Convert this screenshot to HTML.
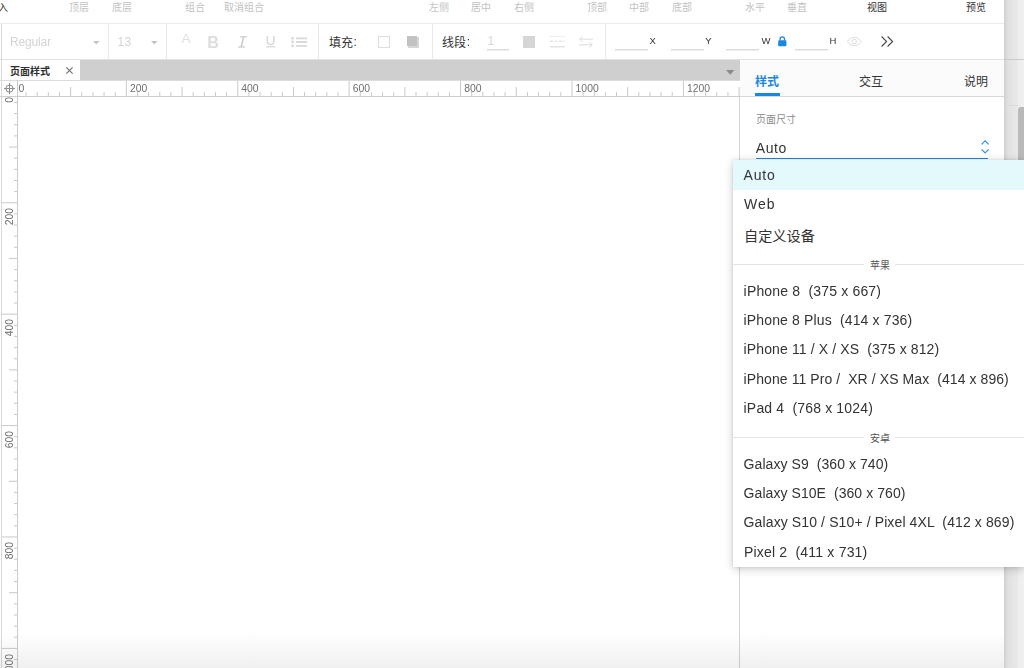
<!DOCTYPE html>
<html lang="zh">
<head>
<meta charset="utf-8">
<title>Axure RP - 页面样式</title>
<style>
*{box-sizing:border-box;margin:0;padding:0}
html,body{width:1024px;height:668px;overflow:hidden;background:#fff}
body{position:relative;font-family:"Liberation Sans",sans-serif;color:#333}
.abs,.abs>*{position:absolute}
svg{position:absolute;display:block;overflow:visible}
svg text{font-family:"Liberation Sans","Noto Sans CJK SC",sans-serif;white-space:pre}
.t{position:absolute;white-space:pre;line-height:1}
.L{position:absolute;left:0;top:0;width:100%;height:100%;will-change:transform}
/* top menu */
#menu{left:0;top:0;width:1004px;height:24px;background:#fff;border-bottom:1px solid #ebebeb}
#menu svg{top:2.100px}
/* toolbar */
#tool{left:0;top:24px;width:1004px;height:36px;background:#fff;border-bottom:1px solid #e2e2e2}
.vsep{position:absolute;top:0;width:1px;height:35px;background:#e9e9e9}
.uline{position:absolute;height:2px;background:linear-gradient(180deg,#dadada 0,#dadada 1px,#f0f0f0 1px,#f0f0f0 2px);top:25px}
.lbl{position:absolute;font-size:9.5px;line-height:1;top:36.400px;color:#333}
/* tab bar */
#tabs{left:0;top:60px;width:740px;height:20.5px;background:#cfcfcf}
#tab1{left:0;top:0;width:80px;height:20.5px;background:#fff}
/* rulers */
#rh{left:0;top:80px;width:740px;height:17px;background:#fff}
#rv{left:0;top:97px;width:18px;height:571px;background:#fff}
.rl{position:absolute;top:4.3px;font-size:10.4px;line-height:1;color:#6e6e6e}
.rv{position:absolute;left:5.400px;font-size:10.4px;line-height:1;color:#6e6e6e;transform-origin:0 0;transform:rotate(-90deg) translateX(-100%)}
/* right panel */
#panel{left:741px;top:60px;width:263px;height:608px;background:#fff}
#phead{left:-1px;top:0;width:264px;height:37px;background:#fbfbfb;border-bottom:1px solid #d8d8d8}
/* right strip */
#strip{left:1004px;top:0;width:20px;height:668px;background:linear-gradient(90deg,#cbcbcb 0,#d8d8d8 1.500px,#e2e2e2 5px,#e9e9e9 14px,#ededed 14px,#f0f0f0 20px)}
/* dropdown */
#dd{left:733px;top:160px;width:291px;height:407px;background:#fff;box-shadow:0 2px 9px rgba(0,0,0,.20),0 0 3px rgba(0,0,0,.10)}
.dd{font-size:14px;color:#333}
#hl{left:0;top:0;width:291px;height:30px;background:#e3f9fc}
.hr{position:absolute;height:1px;background:#e4e4e4}
#fade{left:0;top:632px;width:1004px;height:36px;background:linear-gradient(180deg,rgba(0,0,0,0) 0,rgba(0,0,0,.058) 100%);pointer-events:none}
</style>
</head>
<body>

<!-- ===== top menu ===== -->
<div id="menu" class="abs">
<svg width="10" height="10" viewBox="0 0 10 10" style="left:-1.6px" fill="#333"><text x="0" y="8.8" font-size="10" fill="#333">入</text></svg>
<svg width="20" height="10" viewBox="0 0 20 10" style="left:69px" fill="#c3c3c3"><text x="0" y="8.8" font-size="10" fill="#c3c3c3">顶层</text></svg>
<svg width="20" height="10" viewBox="0 0 20 10" style="left:111.5px" fill="#c3c3c3"><text x="0" y="8.8" font-size="10" fill="#c3c3c3">底层</text></svg>
<svg width="20" height="10" viewBox="0 0 20 10" style="left:184.5px" fill="#c3c3c3"><text x="0" y="8.8" font-size="10" fill="#c3c3c3">组合</text></svg>
<svg width="40" height="10" viewBox="0 0 40 10" style="left:223.7px" fill="#c3c3c3"><text x="0" y="8.8" font-size="10" fill="#c3c3c3">取消组合</text></svg>
<svg width="20" height="10" viewBox="0 0 20 10" style="left:428.7px" fill="#c3c3c3"><text x="0" y="8.8" font-size="10" fill="#c3c3c3">左侧</text></svg>
<svg width="20" height="10" viewBox="0 0 20 10" style="left:471px" fill="#c3c3c3"><text x="0" y="8.8" font-size="10" fill="#c3c3c3">居中</text></svg>
<svg width="20" height="10" viewBox="0 0 20 10" style="left:513.8px" fill="#c3c3c3"><text x="0" y="8.8" font-size="10" fill="#c3c3c3">右侧</text></svg>
<svg width="20" height="10" viewBox="0 0 20 10" style="left:587px" fill="#c3c3c3"><text x="0" y="8.8" font-size="10" fill="#c3c3c3">顶部</text></svg>
<svg width="20" height="10" viewBox="0 0 20 10" style="left:629.4px" fill="#c3c3c3"><text x="0" y="8.8" font-size="10" fill="#c3c3c3">中部</text></svg>
<svg width="20" height="10" viewBox="0 0 20 10" style="left:671.6px" fill="#c3c3c3"><text x="0" y="8.8" font-size="10" fill="#c3c3c3">底部</text></svg>
<svg width="20" height="10" viewBox="0 0 20 10" style="left:744.5px" fill="#c3c3c3"><text x="0" y="8.8" font-size="10" fill="#c3c3c3">水平</text></svg>
<svg width="20" height="10" viewBox="0 0 20 10" style="left:787.2px" fill="#c3c3c3"><text x="0" y="8.8" font-size="10" fill="#c3c3c3">垂直</text></svg>
<svg width="20" height="10" viewBox="0 0 20 10" style="left:867.2px" fill="#333"><text x="0" y="8.8" font-size="10" fill="#333">视图</text></svg>
<svg width="20" height="10" viewBox="0 0 20 10" style="left:965.5px" fill="#333"><text x="0" y="8.8" font-size="10" fill="#333">预览</text></svg>
</div>

<!-- ===== toolbar ===== -->
<div id="tool" class="abs">
<svg style="left:93.4px;top:17px" width="7" height="4" viewBox="0 0 7 4"><path d="M0 0h6.6L3.3 3.4z" fill="#c4c4c4"/></svg>
<div class="vsep" style="left:108px"></div>
<svg style="left:150.6px;top:17px" width="7" height="4" viewBox="0 0 7 4"><path d="M0 0h6.6L3.3 3.4z" fill="#c4c4c4"/></svg>
<div class="vsep" style="left:166px"></div>
<!-- A B I U list -->
<svg style="left:238px;top:11.5px" width="9" height="12" viewBox="0 0 9 12" fill="none" stroke="#d6d6d6" stroke-width="1.5"><path d="M2.1 .75h6.8M.1 11h6.8"/><path d="M5.7 .75L3.1 11" stroke="#c4c4c4" stroke-width="1.3"/></svg>
<svg style="left:266px;top:11.5px" width="10" height="12" viewBox="0 0 10 12" fill="none" stroke="#d8d8d8" stroke-width="1.5"><path d="M1.3 0v5.2a3.3 3.3 0 0 0 6.600 0V0"/><path d="M.2 10.8h9" stroke-width="1.3"/></svg>
<svg style="left:290.800px;top:12.500px" width="17" height="11" viewBox="0 0 17 11" fill="#d8d8d8"><circle cx="1.500" cy="1.300" r="1.400"/><circle cx="1.500" cy="5" r="1.400"/><circle cx="1.500" cy="8.800" r="1.400"/><rect x="4.900" y=".4" width="11.300" height="1.800" rx=".5"/><rect x="4.900" y="4.100" width="11.300" height="1.800" rx=".5"/><rect x="4.900" y="7.900" width="11.300" height="1.800" rx=".5"/></svg>
<div class="vsep" style="left:318px"></div>
<!-- fill -->
<svg width="24" height="12" viewBox="0 0 24 12" style="left:328.8px;top:11.6px" fill="#333"><text x="0" y="10.5" font-size="12" fill="#333">填充</text></svg>
<div style="left:378px;top:11.6px;width:12px;height:12px;border:1px solid #dedede;background:#fff"></div>
<div style="left:408px;top:12.6px;width:11.4px;height:11.4px;background:#d6d6d6"></div>
<div style="left:406.6px;top:11.6px;width:10.6px;height:10.6px;background:#c2c2c2"></div>
<div class="vsep" style="left:432px"></div>
<!-- line -->
<svg width="24" height="12" viewBox="0 0 24 12" style="left:441.6px;top:11.6px" fill="#333"><text x="0" y="10.5" font-size="12" fill="#333">线段</text></svg>
<div class="uline" style="left:487.3px;width:22px"></div>
<div style="left:523px;top:11.5px;width:12px;height:12px;background:#d6d6d6"></div>
<svg style="left:550px;top:12px" width="15" height="12" viewBox="0 0 15 12" fill="none" stroke="#dcdcdc" stroke-width="1"><path d="M0 .6h15" stroke-dasharray="1.4 1.3"/><path d="M0 5.2h15" stroke-dasharray="3 1.5"/><path d="M0 10.8h15" stroke-width="1.2"/></svg>
<svg style="left:579px;top:12px" width="15" height="12" viewBox="0 0 15 12" fill="none" stroke="#dcdcdc" stroke-width="1"><path d="M14 3.2H.8M3.4 .6L.8 3.2l2.6 2.6"/><path d="M0 8.8h13.2M10.6 6.2l2.6 2.6-2.6 2.6"/></svg>
<div class="vsep" style="left:605px"></div>
<!-- x y w h -->
<div class="uline" style="left:615px;width:33.2px"></div>
<div class="uline" style="left:670.7px;width:33.2px"></div>
<div class="uline" style="left:726.1px;width:33.2px"></div>
<svg style="left:778px;top:12.2px" width="9" height="11" viewBox="0 0 9 11"><path d="M2.1 4.6V3a2.2 2.2 0 0 1 4.4 0v1.6" fill="none" stroke="#1a88e0" stroke-width="1.3"/><rect x=".2" y="4.2" width="8.2" height="6" rx=".9" fill="#1a88e0"/></svg>
<div class="uline" style="left:795.1px;width:33.3px"></div>
<svg style="left:847px;top:13px" width="15" height="9" viewBox="0 0 15 9" fill="none" stroke="#dadada" stroke-width="1"><path d="M.5 4.5C3 .9 5.2 .5 7.3 .5s4.400 .4 6.900 4c-2.500 3.600-4.700 4-6.900 4S3 8.100 .5 4.500z"/><circle cx="7.300" cy="4.500" r="2.200"/></svg>
<svg style="left:881px;top:12.200px" width="13" height="11" viewBox="0 0 13 11" fill="none" stroke="#444" stroke-width="1.100"><path d="M.6 .5l5 5-5 5M6.600 .500l5 5-5 5"/></svg>
</div>

<!-- ===== page tab bar ===== -->
<div id="tabs" class="abs">
<div id="tab1"></div>
<svg width="40" height="10" viewBox="0 0 40 10" style="left:10.400px;top:5.700px" fill="#2e2e2e"><text x="0" y="8.8" font-size="10" font-weight="bold" fill="#2e2e2e">页面样式</text></svg>
<svg style="left:66px;top:7.300px" width="7" height="7" viewBox="0 0 7 7" fill="none" stroke="#707070" stroke-width="1.200"><path d="M.3 .4l6.300 6.200M6.600 .4L.3 6.600"/></svg>
<svg style="left:725.600px;top:9.800px" width="9" height="5" viewBox="0 0 9 5"><path d="M0 0h8.400L4.200 4.800z" fill="#8a8a8a"/></svg>
</div>

<!-- ===== rulers ===== -->
<div id="rh" class="abs">
<svg style="left:0;top:0" width="740" height="17" viewBox="0 0 740 17" stroke="#c9c9c9" stroke-width="1"><line x1="26.06" y1="12" x2="26.06" y2="16"/><line x1="37.20" y1="12" x2="37.20" y2="16"/><line x1="48.34" y1="12" x2="48.34" y2="16"/><line x1="59.48" y1="12" x2="59.48" y2="16"/><line x1="70.62" y1="7" x2="70.62" y2="16"/><line x1="81.77" y1="12" x2="81.77" y2="16"/><line x1="92.91" y1="12" x2="92.91" y2="16"/><line x1="104.05" y1="12" x2="104.05" y2="16"/><line x1="115.19" y1="12" x2="115.19" y2="16"/><line x1="126.33" y1="0" x2="126.33" y2="16"/><line x1="137.47" y1="12" x2="137.47" y2="16"/><line x1="148.61" y1="12" x2="148.61" y2="16"/><line x1="159.75" y1="12" x2="159.75" y2="16"/><line x1="170.89" y1="12" x2="170.89" y2="16"/><line x1="182.03" y1="7" x2="182.03" y2="16"/><line x1="193.18" y1="12" x2="193.18" y2="16"/><line x1="204.32" y1="12" x2="204.32" y2="16"/><line x1="215.46" y1="12" x2="215.46" y2="16"/><line x1="226.60" y1="12" x2="226.60" y2="16"/><line x1="237.74" y1="0" x2="237.74" y2="16"/><line x1="248.88" y1="12" x2="248.88" y2="16"/><line x1="260.02" y1="12" x2="260.02" y2="16"/><line x1="271.16" y1="12" x2="271.16" y2="16"/><line x1="282.30" y1="12" x2="282.30" y2="16"/><line x1="293.45" y1="7" x2="293.45" y2="16"/><line x1="304.59" y1="12" x2="304.59" y2="16"/><line x1="315.73" y1="12" x2="315.73" y2="16"/><line x1="326.87" y1="12" x2="326.87" y2="16"/><line x1="338.01" y1="12" x2="338.01" y2="16"/><line x1="349.15" y1="0" x2="349.15" y2="16"/><line x1="360.29" y1="12" x2="360.29" y2="16"/><line x1="371.43" y1="12" x2="371.43" y2="16"/><line x1="382.57" y1="12" x2="382.57" y2="16"/><line x1="393.71" y1="12" x2="393.71" y2="16"/><line x1="404.86" y1="7" x2="404.86" y2="16"/><line x1="416.00" y1="12" x2="416.00" y2="16"/><line x1="427.14" y1="12" x2="427.14" y2="16"/><line x1="438.28" y1="12" x2="438.28" y2="16"/><line x1="449.42" y1="12" x2="449.42" y2="16"/><line x1="460.56" y1="0" x2="460.56" y2="16"/><line x1="471.70" y1="12" x2="471.70" y2="16"/><line x1="482.84" y1="12" x2="482.84" y2="16"/><line x1="493.98" y1="12" x2="493.98" y2="16"/><line x1="505.12" y1="12" x2="505.12" y2="16"/><line x1="516.26" y1="7" x2="516.26" y2="16"/><line x1="527.41" y1="12" x2="527.41" y2="16"/><line x1="538.55" y1="12" x2="538.55" y2="16"/><line x1="549.69" y1="12" x2="549.69" y2="16"/><line x1="560.83" y1="12" x2="560.83" y2="16"/><line x1="571.97" y1="0" x2="571.97" y2="16"/><line x1="583.11" y1="12" x2="583.11" y2="16"/><line x1="594.25" y1="12" x2="594.25" y2="16"/><line x1="605.39" y1="12" x2="605.39" y2="16"/><line x1="616.53" y1="12" x2="616.53" y2="16"/><line x1="627.67" y1="7" x2="627.67" y2="16"/><line x1="638.82" y1="12" x2="638.82" y2="16"/><line x1="649.96" y1="12" x2="649.96" y2="16"/><line x1="661.10" y1="12" x2="661.10" y2="16"/><line x1="672.24" y1="12" x2="672.24" y2="16"/><line x1="683.38" y1="0" x2="683.38" y2="16"/><line x1="694.52" y1="12" x2="694.52" y2="16"/><line x1="705.66" y1="12" x2="705.66" y2="16"/><line x1="716.80" y1="12" x2="716.80" y2="16"/><line x1="727.94" y1="12" x2="727.94" y2="16"/><line x1="739.09" y1="7" x2="739.09" y2="16"/><line x1="0" y1="0.500" x2="740" y2="0.500" stroke="#dcdcdc"/><line x1="0" y1="16.500" x2="740" y2="16.500" stroke="#cdcdcd"/></svg>
<div style="left:0;top:1px;width:17px;height:15px;background:#fff"></div>
<div style="left:17px;top:0;width:1px;height:17px;background:#cbcbcb"></div>
<svg style="left:4px;top:3px" width="12" height="12" viewBox="0 0 12 12" fill="none" stroke="#8a8a8a" stroke-width="1"><circle cx="5.500" cy="5.600" r="3.600"/><path d="M5.500 0v11.200M0 5.600h11"/></svg>
</div>
<div id="rv" class="abs">
<svg style="left:0;top:-17px" width="18" height="588" viewBox="0 0 18 588" stroke="#c9c9c9" stroke-width="1"><line x1="14" y1="22.48" x2="18" y2="22.48"/><line x1="14" y1="33.62" x2="18" y2="33.62"/><line x1="14" y1="44.76" x2="18" y2="44.76"/><line x1="14" y1="55.90" x2="18" y2="55.90"/><line x1="9" y1="67.05" x2="18" y2="67.05"/><line x1="14" y1="78.19" x2="18" y2="78.19"/><line x1="14" y1="89.33" x2="18" y2="89.33"/><line x1="14" y1="100.47" x2="18" y2="100.47"/><line x1="14" y1="111.61" x2="18" y2="111.61"/><line x1="2" y1="122.75" x2="18" y2="122.75"/><line x1="14" y1="133.89" x2="18" y2="133.89"/><line x1="14" y1="145.03" x2="18" y2="145.03"/><line x1="14" y1="156.17" x2="18" y2="156.17"/><line x1="14" y1="167.31" x2="18" y2="167.31"/><line x1="9" y1="178.46" x2="18" y2="178.46"/><line x1="14" y1="189.60" x2="18" y2="189.60"/><line x1="14" y1="200.74" x2="18" y2="200.74"/><line x1="14" y1="211.88" x2="18" y2="211.88"/><line x1="14" y1="223.02" x2="18" y2="223.02"/><line x1="2" y1="234.16" x2="18" y2="234.16"/><line x1="14" y1="245.30" x2="18" y2="245.30"/><line x1="14" y1="256.44" x2="18" y2="256.44"/><line x1="14" y1="267.58" x2="18" y2="267.58"/><line x1="14" y1="278.72" x2="18" y2="278.72"/><line x1="9" y1="289.87" x2="18" y2="289.87"/><line x1="14" y1="301.01" x2="18" y2="301.01"/><line x1="14" y1="312.15" x2="18" y2="312.15"/><line x1="14" y1="323.29" x2="18" y2="323.29"/><line x1="14" y1="334.43" x2="18" y2="334.43"/><line x1="2" y1="345.57" x2="18" y2="345.57"/><line x1="14" y1="356.71" x2="18" y2="356.71"/><line x1="14" y1="367.85" x2="18" y2="367.85"/><line x1="14" y1="378.99" x2="18" y2="378.99"/><line x1="14" y1="390.13" x2="18" y2="390.13"/><line x1="9" y1="401.28" x2="18" y2="401.28"/><line x1="14" y1="412.42" x2="18" y2="412.42"/><line x1="14" y1="423.56" x2="18" y2="423.56"/><line x1="14" y1="434.70" x2="18" y2="434.70"/><line x1="14" y1="445.84" x2="18" y2="445.84"/><line x1="2" y1="456.98" x2="18" y2="456.98"/><line x1="14" y1="468.12" x2="18" y2="468.12"/><line x1="14" y1="479.26" x2="18" y2="479.26"/><line x1="14" y1="490.40" x2="18" y2="490.40"/><line x1="14" y1="501.54" x2="18" y2="501.54"/><line x1="9" y1="512.69" x2="18" y2="512.69"/><line x1="14" y1="523.83" x2="18" y2="523.83"/><line x1="14" y1="534.97" x2="18" y2="534.97"/><line x1="14" y1="546.11" x2="18" y2="546.11"/><line x1="14" y1="557.25" x2="18" y2="557.25"/><line x1="2" y1="568.39" x2="18" y2="568.39"/><line x1="14" y1="579.53" x2="18" y2="579.53"/><line x1="14" y1="590.67" x2="18" y2="590.67"/></svg>
<div style="left:17px;top:0;width:1px;height:571px;background:#cbcbcb"></div>
</div>

<!-- ===== right panel ===== -->
<div id="panel" class="abs">
<div id="phead"></div>
<div style="left:-2px;top:37px;width:1px;height:571px;background:#d4d4d4"></div>
<svg width="24" height="12" viewBox="0 0 24 12" style="left:13.700px;top:15px" fill="#1a88e0"><text x="0" y="10.5" font-size="12" font-weight="bold" fill="#1a88e0">样式</text></svg>
<div style="left:14px;top:33px;width:25.200px;height:3px;background:#1a88e0"></div>
<svg width="24" height="12" viewBox="0 0 24 12" style="left:117.800px;top:15px" fill="#333"><text x="0" y="10.5" font-size="12" fill="#333">交互</text></svg>
<svg width="24" height="12" viewBox="0 0 24 12" style="left:223.200px;top:15px" fill="#333"><text x="0" y="10.5" font-size="12" fill="#333">说明</text></svg>
<svg width="40" height="10" viewBox="0 0 40 10" style="left:14.700px;top:53.500px" fill="#8c8c8c"><text x="0" y="8.8" font-size="10" fill="#8c8c8c">页面尺寸</text></svg>
<div style="left:15px;top:97.700px;width:232px;height:1px;background:#1a88e0"></div>
<svg style="left:239.500px;top:79.500px" width="9" height="14" viewBox="0 0 9 14" fill="none" stroke="#2b93e4" stroke-width="1.200"><path d="M.6 4.400l3.500-3.500 3.500 3.500M.6 9.300l3.500 3.500 3.500-3.500"/></svg>
</div>

<!-- ===== right strip ===== -->
<div id="strip" class="abs">
<div style="left:0;top:59px;width:20px;height:1px;background:#cbcbcb"></div>
<div style="left:0;top:105px;width:14px;height:1px;background:#d9d9d9"></div>
<div style="left:14px;top:106.500px;width:8px;height:80px;background:#b9b9b9;border-radius:3px 0 0 0"></div>
</div>

<div class="abs" style="left:1px;top:24px;width:1px;height:644px;background:#d9d9d9"></div>
<div id="fade" class="abs"></div>

<!-- ===== dropdown ===== -->
<div id="dd" class="abs">
<div id="hl"></div>
<svg width="71" height="14.2" viewBox="0 0 71 14.2" style="left:10.600px;top:67.600px" fill="#333"><text x="0" y="12.5" font-size="14.2" fill="#333">自定义设备</text></svg>
<div class="hr" style="left:0;top:104px;width:131px"></div>
<svg width="20" height="10" viewBox="0 0 20 10" style="left:137px;top:99.700px" fill="#555"><text x="0" y="8.8" font-size="10" fill="#555">苹果</text></svg>
<div class="hr" style="left:162px;top:104px;width:130px"></div>
<div class="hr" style="left:0;top:277px;width:131px"></div>
<svg width="20" height="10" viewBox="0 0 20 10" style="left:137px;top:272.500px" fill="#555"><text x="0" y="8.8" font-size="10" fill="#555">安卓</text></svg>
<div class="hr" style="left:162px;top:277px;width:130px"></div>
</div>

<!-- ===== text overlay (single transparent layer => grayscale AA) ===== -->
<div class="L" id="rvl" style="top:97px;height:571px;width:17px;overflow:hidden"><div style="position:absolute;left:0;top:-97px;width:17px;height:668px"><span class="rv" style="top:96.5px">0</span><span class="rv" style="top:207.9px">200</span><span class="rv" style="top:319.4px">400</span><span class="rv" style="top:430.8px">600</span><span class="rv" style="top:542.2px">800</span><span class="rv" style="top:653.6px">1000</span></div></div>
<div class="L" id="txt">
<div style="position:absolute;left:0;top:80px;width:740px;height:17px;overflow:hidden"><span class="rl" style="left:18.5px">0</span><span class="rl" style="left:129.9px">200</span><span class="rl" style="left:241.3px">400</span><span class="rl" style="left:352.8px">600</span><span class="rl" style="left:464.2px">800</span><span class="rl" style="left:575.6px">1000</span><span class="rl" style="left:687.0px">1200</span></div>
<div class="t" style="left:10px;top:36px;font-size:12px;color:#d4d4d4;letter-spacing:-.15px">Regular</div>
<div class="t" style="left:117.600px;top:36px;font-size:12px;color:#d4d4d4;letter-spacing:.3px">13</div>
<div class="t" style="left:181.400px;top:32.300px;font-size:13.500px;color:#dfdfdf">A</div>
<div class="t" style="left:207.300px;top:33.700px;font-size:16.300px;font-weight:bold;color:#dddddd">B</div>
<div class="t" style="left:353.400px;top:36.400px;font-size:12px;color:#333">:</div>
<div class="t" style="left:466.800px;top:36.400px;font-size:12px;color:#333">:</div>
<div class="t" style="left:487.600px;top:35.400px;font-size:12px;color:#d6d6d6">1</div>
<div class="lbl" style="left:649.600px">X</div>
<div class="lbl" style="left:705.200px">Y</div>
<div class="lbl" style="left:761.400px">W</div>
<div class="lbl" style="left:829.600px">H</div>
<div class="t" style="left:755.800px;top:141px;font-size:14px;letter-spacing:.6px">Auto</div>
<div class="t dd" style="left:743.600px;top:168px;letter-spacing:.8px">Auto</div>
<div class="t dd" style="left:743.900px;top:197px;letter-spacing:1.050px">Web</div>
<div class="t dd" style="left:743.600px;top:284px;letter-spacing:.175px">iPhone 8  (375 x 667)</div>
<div class="t dd" style="left:743.600px;top:313px;letter-spacing:.144px">iPhone 8 Plus  (414 x 736)</div>
<div class="t dd" style="left:743.600px;top:342px;letter-spacing:.120px">iPhone 11 / X / XS  (375 x 812)</div>
<div class="t dd" style="left:743.600px;top:372px;letter-spacing:.080px">iPhone 11 Pro /  XR / XS Max  (414 x 896)</div>
<div class="t dd" style="left:743.600px;top:401px;letter-spacing:.167px">iPad 4  (768 x 1024)</div>
<div class="t dd" style="left:743.600px;top:457px;letter-spacing:.070px">Galaxy S9  (360 x 740)</div>
<div class="t dd" style="left:743.600px;top:486px;letter-spacing:.065px">Galaxy S10E  (360 x 760)</div>
<div class="t dd" style="left:743.600px;top:515px;letter-spacing:.115px">Galaxy S10 / S10+ / Pixel 4XL  (412 x 869)</div>
<div class="t dd" style="left:743.900px;top:545px;letter-spacing:.200px">Pixel 2  (411 x 731)</div>
</div>

</body>
</html>
